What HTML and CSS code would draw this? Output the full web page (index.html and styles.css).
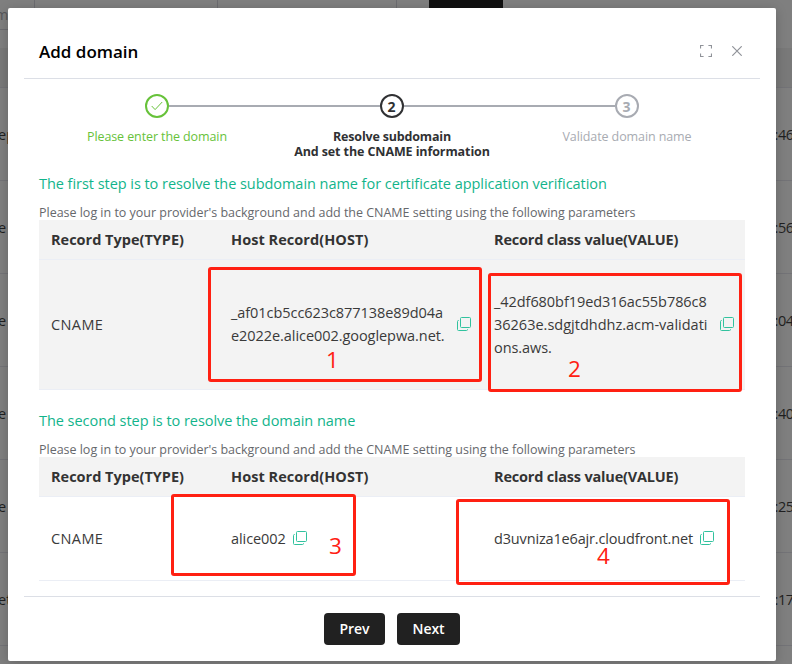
FILE: index.html
```html
<!DOCTYPE html>
<html lang="en">
<head>
<meta charset="utf-8">
<title>Add domain</title>
<link rel="stylesheet" href="styles.css">
</head>
<body>
<svg class="defs" aria-hidden="true">
  <symbol id="copy" viewBox="0 0 14 14">
    <rect x="3.5" y=".5" width="10" height="10" rx="1"/>
    <path d="M1.8 3.5H1.5a1 1 0 0 0-1 1v8a1 1 0 0 0 1 1h8a1 1 0 0 0 1-1v-.3"/>
  </symbol>
</svg>

<div class="page">
  <div class="filters">
    <div class="filter filter-a">m</div>
    <div class="filter filter-b"></div>
    <div class="filter filter-c"></div>
    <div class="search"></div>
  </div>
  <div class="list-head"></div>
  <div class="list-row"><span>ep</span><span class="time">:46</span></div>
  <div class="list-row"><span>e</span><span class="time">:56</span></div>
  <div class="list-row"><span>e</span><span class="time">:04</span></div>
  <div class="list-row"><span>e</span><span class="time">:40</span></div>
  <div class="list-row"><span>e</span><span class="time">:25</span></div>
  <div class="list-row"><span>et</span><span class="time">:17</span></div>
  <div class="list-row"></div>
</div>

<div class="dialog">
  <header class="dialog-head">
    <h1>Add domain</h1>
    <div class="tools">
      <svg width="12" height="12" viewBox="0 0 12 12"><path d="M.5 3.6V.5h3.1M8.4.5h3.1v3.1M11.5 8.4v3.1H8.4M3.6 11.5H.5V8.4"/></svg>
      <svg width="10" height="10" viewBox="0 0 10 10"><path d="M.3.3l9.4 9.4M9.7.3L.3 9.7"/></svg>
    </div>
  </header>

  <div class="steps">
    <div class="step done">
      <div class="track"><div class="dot"><svg width="12" height="10" viewBox="0 0 12 10"><path d="M.7 5L4.1 8.6 11.2 1"/></svg></div></div>
      <div class="label">Please enter the domain</div>
    </div>
    <div class="step current">
      <div class="track"><div class="dot">2</div></div>
      <div class="label"><span class="tight">Resolve subdomain</span><br>And set the CNAME information</div>
    </div>
    <div class="step wait">
      <div class="track"><div class="dot">3</div></div>
      <div class="label">Validate domain name</div>
    </div>
  </div>

  <section class="block">
    <h2>The first step is to resolve the subdomain name for certificate application verification</h2>
    <p>Please log in to your provider's background and add the CNAME setting using the following parameters</p>
    <div class="table">
      <div class="tr th"><div>Record Type(TYPE)</div><div class="h-host">Host Record(HOST)</div><div class="h-value">Record class value(VALUE)</div></div>
      <div class="tr td shaded">
        <div class="type">CNAME</div>
        <div class="cell"><span class="text">_af01cb5cc623c877138e89d04a<br>e2022e.alice002.googlepwa.net.</span><svg class="copy"><use href="#copy"/></svg></div>
        <div class="cell"><span class="text">_42df680bf19ed316ac55b786c8<br><span class="even">36263e.sdgjtdhdhz.acm-validati</span><br>ons.aws.</span><svg class="copy"><use href="#copy"/></svg></div>
      </div>
    </div>
  </section>

  <section class="block second">
    <h2>The second step is to resolve the domain name</h2>
    <p>Please log in to your provider's background and add the CNAME setting using the following parameters</p>
    <div class="table">
      <div class="tr th"><div>Record Type(TYPE)</div><div class="h-host">Host Record(HOST)</div><div class="h-value">Record class value(VALUE)</div></div>
      <div class="tr td short">
        <div class="type">CNAME</div>
        <div class="cell"><span class="host">alice002</span><svg class="copy"><use href="#copy"/></svg></div>
        <div class="cell"><span class="cdn">d3uvniza1e6ajr.cloudfront.net</span><svg class="copy"><use href="#copy"/></svg></div>
      </div>
    </div>
  </section>

  <footer class="actions">
    <button class="prev">Prev</button>
    <button class="next">Next</button>
  </footer>
</div>

<div class="mark mark-1"><span>1</span></div>
<div class="mark mark-2"><span>2</span></div>
<div class="mark mark-3"><span>3</span></div>
<div class="mark mark-4"><span>4</span></div>
</body>
</html>
```
FILE: styles.css
```css
* { box-sizing: border-box; }
body {
  margin: 0;
  width: 792px;
  height: 664px;
  overflow: hidden;
  position: relative;
  background: #7f7f7f;
  font: 14.5px/23px "Open Sans", "Noto Sans", sans-serif;
  color: #3a3a3a;
}
.defs { position: absolute; width: 0; height: 0; }
h1, h2, p { margin: 0; }
svg { fill: none; stroke: currentColor; flex: none; }

/* dimmed page */
.page { height: 664px; overflow: hidden; }
.filters { display: flex; height: 48px; }
.filter { height: 30px; border: solid #6c6c70; border-width: 0 1px 1px 0; color: #57575a; line-height: 30px; }
.filter-a { width: 35px; text-indent: -5px; }
.filter-b { width: 183px; }
.filter-c { width: 179px; }
.search { width: 74px; height: 10px; margin-left: 32px; background: #111; }
.list-head { height: 40px; background: #797979; border-bottom: 1px solid #737377; }
.list-row {
  display: flex;
  justify-content: space-between;
  align-items: center;
  height: 93px;
  padding-top: 1px;
  border-bottom: 1px solid #737377;
  color: #1f1f21;
}
.list-row span { margin-left: -2px; }
.list-row .time { width: 17.5px; white-space: nowrap; letter-spacing: -.4px; }

/* dialog */
.dialog {
  position: absolute;
  left: 8px;
  top: 8px;
  width: 768px;
  height: 653px;
  padding: 0 16px;
  background: #fff;
  border-radius: 2px;
  box-shadow: 0 2px 12px rgba(0, 0, 0, .2);
}
.dialog-head {
  display: flex;
  justify-content: space-between;
  align-items: center;
  height: 71px;
  padding: 16px 18px 0 15px;
  border-bottom: 1px solid #dcdfe6;
}
h1 { padding-top: 2px; font-size: 17px; font-weight: 600; color: #000; line-height: 24px; }
.tools { display: flex; align-items: center; gap: 20px; color: #909399; }
.tools svg { stroke-width: 1.2; }

.steps { display: flex; width: 705px; margin: 15px 0 0 15px; }
.step { flex: 1; text-align: center; }
.track { display: flex; align-items: center; height: 24px; }
.track::before, .track::after { content: ""; flex: 1; height: 2px; background: #a8abb2; }
.done .track::before, .wait .track::after { background: none; }
.dot {
  display: flex;
  align-items: center;
  justify-content: center;
  width: 24px;
  height: 24px;
  border: 2px solid;
  border-radius: 50%;
  font-size: 14px;
  font-weight: 700;
}
.label { margin-top: 11px; padding-left: 1px; font-size: 12.5px; line-height: 15px; letter-spacing: -.1px; white-space: nowrap; }
.tight { letter-spacing: -.18px; }
.done { color: #67c23a; }
.current { color: #303133; }
.current .label { font-weight: 700; }
.wait { color: #a8abb2; }

.block { margin: 13px 15px 0; }
.block.second { margin-top: 19px; }
h2 { font-size: 14.5px; font-weight: 400; line-height: 24px; letter-spacing: -.045px; color: #12b48b; white-space: nowrap; }
p { margin-top: 9px; font-size: 12.5px; line-height: 15px; letter-spacing: -.018px; color: #66686c; white-space: nowrap; }
.tr { display: grid; grid-template-columns: 180px 263px 263px; align-items: center; border-bottom: 1px solid #ebeef5; }
.tr > div { padding-left: 12px; }
.th { height: 40px; background: #f3f3f3; font-weight: 700; color: #333; }
.h-host { letter-spacing: .05px; }
.h-value { letter-spacing: -.19px; }
.td { height: 130px; }
.shaded { background: #f3f3f3; }
.short { height: 84px; }
.type { letter-spacing: .4px; }
.cell { display: flex; align-items: center; }
.text { width: 226px; margin-top: -1px; letter-spacing: -.06px; white-space: nowrap; }
.even { letter-spacing: 0; }
.host { width: 62px; letter-spacing: -.07px; }
.cdn { width: 206px; letter-spacing: -.16px; }
.copy { width: 14px; height: 14px; margin-top: -1px; color: #31c29e; }

.actions {
  display: flex;
  justify-content: center;
  gap: 12px;
  margin-top: 15px;
  padding-top: 16px;
  border-top: 1px solid #dcdfe6;
}
button {
  height: 32px;
  padding: 0;
  border: 0;
  border-radius: 4px;
  background: #212121;
  color: #fff;
  font: 600 14px/32px "Open Sans", sans-serif;
  letter-spacing: -.1px;
}
.prev { width: 61px; }
.next { width: 63px; }

/* annotation frames */
.mark { position: absolute; border: 3px solid #ff2012; border-radius: 3px; color: #ff2012; font-size: 22.5px; line-height: 24px; }
.mark span { position: absolute; }
.mark-1 { left: 208px; top: 267px; width: 274px; height: 115px; }
.mark-1 span { left: 115px; top: 78px; }
.mark-2 { left: 488px; top: 273px; width: 254px; height: 119px; }
.mark-2 span { left: 77px; top: 81px; }
.mark-3 { left: 171px; top: 494px; width: 185px; height: 82px; }
.mark-3 span { left: 155px; top: 37px; }
.mark-4 { left: 456px; top: 499px; width: 274px; height: 86px; }
.mark-4 span { left: 138px; top: 42px; }
```
